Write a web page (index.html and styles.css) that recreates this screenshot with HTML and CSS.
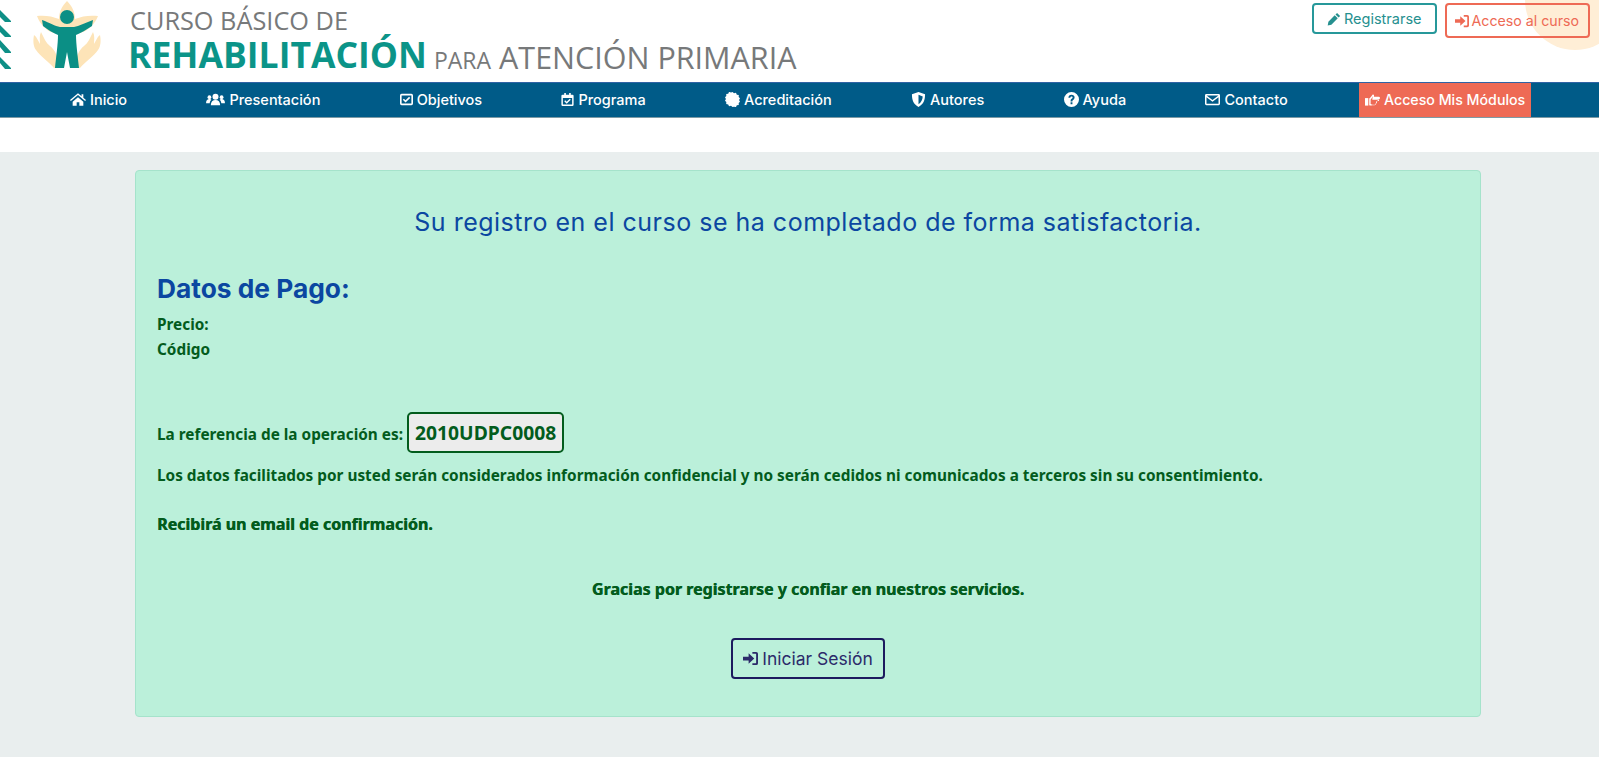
FILE: index.html
```html
<!DOCTYPE html>
<html lang="es">
<head>
<meta charset="utf-8">
<title>Curso Básico de Rehabilitación</title>
<link rel="stylesheet" href="styles.css">
</head>
<body>
<svg width="0" height="0" class="defs">
  <symbol id="i-login" viewBox="0 0 16 16"><path d="M0 6h6V2.500L12 8l-6 5.500V10H0z"/><path d="M10 1h4a2 2 0 0 1 2 2v10a2 2 0 0 1-2 2h-4v-2h3.500a.5.5 0 0 0 .5-.5v-9a.5.5 0 0 0-.5-.5H10z"/></symbol>
</svg>
<header class="top">
  <div class="blob"></div>
  <svg class="chevrons" viewBox="0 0 12 70" width="12" height="70"><path d="M0 10l11 11v1H5L0 17zM0 25l11 11v1H5L0 32zM0 40l11 12v1H5L0 47zM0 57l11 11v1H5L0 63z"/></svg>
  <svg class="logo-mark" viewBox="33 0 72 70" width="72" height="70">
    <path class="sand" d="M67 1C72 6 75 12 75 19 82 16 90 15 98 16 95 24 88 31 80 33H54C46 31 40 24 37 16 44 15 52 16 59 19 59 12 62 6 67 1z"/>
    <path class="sand" d="M34 35C37 37 38 41 40 44 40 40 39 36 41 32 44 38 46 43 50 46 55 50 58 56 59 68H54C49 62 40 56 36 50 33 46 33 40 34 35z"/>
    <path class="sand" transform="matrix(-1 0 0 1 134 0)" d="M34 35C37 37 38 41 40 44 40 40 39 36 41 32 44 38 46 43 50 46 55 50 58 56 59 68H54C49 62 40 56 36 50 33 46 33 40 34 35z"/>
    <circle class="teal" cx="67" cy="17" r="7"/>
    <path class="teal" d="M42 20C50 23 55 26 60 27H74C79 26 85 23 93 20L92 26C86 30 81 33 76 35 76 44 78 58 79 68H70L67 52 64 68H55C56 58 58 44 58 35 53 33 48 30 43 26z"/>
  </svg>
  <div class="brand">
    <div class="brand-top">CURSO BÁSICO DE</div>
    <div class="brand-main"><strong>REHABILITACIÓN</strong><small>PARA</small><span>ATENCIÓN PRIMARIA</span></div>
  </div>
  <div class="top-actions">
    <a class="pill pill-teal"><svg class="ic" viewBox="0 0 16 16"><path d="M11.500 1l3.500 3.500-1.800 1.800-3.500-3.500zM8.800 3.700l3.500 3.500-7.300 7.300-4.200.8.800-4.300z"/></svg>Registrarse</a>
    <a class="pill pill-coral"><svg class="ic"><use href="#i-login"/></svg>Acceso al curso</a>
  </div>
</header>
<nav class="nav">
  <a class="nav-item"><svg class="ic ic-home" viewBox="0 0 18 16"><path d="M9 1L0 8.500l1 1.200L9 3l8 6.700 1-1.200-3-2.500V2h-2v2.300zM3 10.500V15h4.500v-4h3v4H15v-4.500L9 5.500z"/></svg>Inicio</a>
  <a class="nav-item"><svg class="ic ic-w" viewBox="0 0 20 16"><circle cx="10" cy="5" r="3.200"/><circle cx="3.500" cy="5.500" r="2"/><circle cx="16.500" cy="5.500" r="2"/><path d="M5 14c0-3.500 2-5.500 5-5.500s5 2 5 5.500zM0 11c0-2 1.500-3.500 3.500-3.500 1 0 1.800.4 2 .8C4.500 9.300 4 10.500 3.800 12H0zM20 11c0-2-1.500-3.500-3.500-3.500-1 0-1.800.4-2 .8 1 1 1.500 2.200 1.700 3.700H20z"/></svg>Presentación</a>
  <a class="nav-item"><svg class="ic ic-s" viewBox="0 0 16 16"><path fill-rule="evenodd" d="M2 1h12a2 2 0 0 1 2 2v10a2 2 0 0 1-2 2H2a2 2 0 0 1-2-2V3a2 2 0 0 1 2-2zm0 2v10h12V3z"/><path d="M6.800 11.800L3.400 8.400l1.400-1.400 2 2 4.400-4.400 1.400 1.400z"/></svg>Objetivos</a>
  <a class="nav-item"><svg class="ic ic-s" viewBox="0 0 16 16"><path fill-rule="evenodd" d="M4 0h2v2h4V0h2v2h2a1.500 1.500 0 0 1 1.500 1.500v11A1.500 1.500 0 0 1 14 16H2a1.500 1.500 0 0 1-1.500-1.500v-11A1.500 1.500 0 0 1 2 2h2zM2.300 6v8.200h11.400V6z"/><path d="M7 13.200L4 10.200l1.200-1.200L7 10.800l3.800-3.800L12 8.200z"/></svg>Programa</a>
  <a class="nav-item"><svg class="ic" viewBox="0 0 16 16"><path d="M8 0l1.600 1.400L11.700.9l.9 1.900 2.100.4-.1 2.100L16 6.600 15 8.500l1 1.900-1.400 1.300.1 2.100-2.100.4-.9 1.900-2.100-.5L8 16l-1.600-1.400-2.100.5-.9-1.900-2.100-.4.1-2.100L0 9.400 1 7.500 0 5.600l1.400-1.300-.1-2.100 2.100-.4.9-1.900 2.100.5z"/></svg>Acreditación</a>
  <a class="nav-item"><svg class="ic" viewBox="0 0 16 16"><path fill-rule="evenodd" d="M8 0l7 2.500c0 6-1.500 10.500-7 13.500C2.500 13 1 8.500 1 2.500zm0 3v10c3-2 4.300-5 4.500-8.300z"/></svg>Autores</a>
  <a class="nav-item"><svg class="ic" viewBox="0 0 16 16"><path fill-rule="evenodd" d="M8 0a8 8 0 1 1 0 16A8 8 0 0 1 8 0zM7 11v2h2v-2zM8 3C6 3 4.800 4.200 4.700 6h2c.1-.7.500-1.100 1.300-1.100.7 0 1.200.4 1.200 1 0 1.300-2.200 1.300-2.200 3.600V10h2v-.3c0-1.400 2.300-1.600 2.300-3.900C11.300 4.100 9.900 3 8 3z"/></svg>Ayuda</a>
  <a class="nav-item"><svg class="ic" viewBox="0 0 16 16"><path fill-rule="evenodd" d="M1.500 2h13A1.500 1.500 0 0 1 16 3.500v9a1.500 1.500 0 0 1-1.500 1.500h-13A1.500 1.500 0 0 1 0 12.500v-9A1.500 1.500 0 0 1 1.500 2zm.2 1.600L8 8.500l6.300-4.900zm-.1 1.900v6.900h12.800V5.500L8 10.500z"/></svg>Contacto</a>
  <a class="nav-item nav-cta"><svg class="ic" viewBox="0 0 16 16"><path d="M0 6.500h3.500v8H0z"/><path fill-rule="evenodd" d="M4.500 7C6 6.500 7 4 8 3c1-1 2 0 1.500 2h5a1.500 1.500 0 0 1 0 3H13a1.300 1.300 0 0 1-.5 2.300 1.300 1.300 0 0 1-.7 2c0 1-.7 1.700-1.700 1.700H7.500C6 15 5.500 14.300 4.500 14zM6 8v4.800c1 .5 1.500.7 2 .7h2.500c.5 0 .7-.5.500-1 .7-.1 1-.8.6-1.300.7-.3.9-1 .3-1.500h2.400a.75.75 0 0 0 0-1.500H7.800C8 5.800 8.300 5 8.300 4.500 7.700 5.500 7 7 6 8z"/></svg>Acceso Mis Módulos</a>
</nav>
<div class="spacer"></div>
<main class="page">
  <section class="alert">
    <h2 class="lead">Su registro en el curso se ha completado de forma satisfactoria.</h2>
    <h3 class="pay">Datos de Pago:</h3>
    <p class="row">Precio:</p>
    <p class="row">Código</p>
    <p class="ref">La referencia de la operación es: <span class="ref-code">2010UDPC0008</span></p>
    <p class="row legal">Los datos facilitados por usted serán considerados información confidencial y no serán cedidos ni comunicados a terceros sin su consentimiento.</p>
    <p class="row heavy mail">Recibirá un email de confirmación.</p>
    <p class="row heavy thanks">Gracias por registrarse y confiar en nuestros servicios.</p>
    <div class="cta-wrap"><a class="login"><svg class="ic"><use href="#i-login"/></svg>Iniciar Sesión</a></div>
  </section>
</main>
</body>
</html>
```
FILE: styles.css
```css
* { box-sizing: border-box; }
html, body { margin: 0; height: 100%; }
body { background: #e9eeee; font-family: "Inter", "Open Sans", sans-serif; overflow: hidden; }
.defs { position: absolute; }
.ic { width: 15px; height: 15px; fill: currentColor; flex: none; }
.ic-w { width: 19px; }
.ic-home { width: 16px; }
.ic-s { width: 13px; height: 13px; }

.top { position: relative; height: 82px; background: #fff; display: flex; align-items: flex-start; overflow: hidden; }
.blob { position: absolute; right: -26px; top: -50px; width: 100px; height: 100px; border-radius: 50%; background: #ffeed6; }
.chevrons { fill: #0e8f86; margin-right: 21px; flex: none; }
.logo-mark { flex: none; margin-right: 25px; }
.sand { fill: #fde4b8; }
.teal { fill: #0b8f85; }
.brand { padding-top: 6px; }
.brand-top { font: 400 25.300px/28px "Open Sans", sans-serif; color: #77797a; }
.brand-main { display: flex; align-items: baseline; color: #77797a; margin: 1px 0 0 -2px; line-height: 38px; white-space: nowrap; }
.brand-main strong { font: 700 35.500px/38px "Open Sans", sans-serif; color: #0b9488; }
.brand-main small { font: 400 23px/38px "Open Sans", sans-serif; margin: 0 8px 0 7px; position: relative; top: 1px; }
.brand-main span { font: 400 30.500px/38px "Open Sans", sans-serif; position: relative; top: 1px; }
.top-actions { position: absolute; right: 9px; top: 3px; display: flex; gap: 8px; align-items: flex-start; }
.pill { display: flex; align-items: center; gap: 3px; height: 31px; border: 2px solid; border-radius: 4px; background: #fff; }
.pill .ic { width: 14px; height: 14px; }
.pill-teal { padding: 0 13px; font-size: 14.500px; color: #26908f; border-color: #26989a; }
.pill-coral { padding: 0 9px 0 8px; font-size: 14.200px; color: #ee6a55; border-color: #ee6a55; height: 35px; background: transparent; }

.nav { height: 36px; background: #005b88; border-top: 1px solid #2f63a5; border-bottom: 1px solid #7d9aa5; display: flex; align-items: stretch; gap: 67.300px; padding-left: 64px; }
.nav-item { display: flex; align-items: center; gap: 4px; padding: 0 6px 2px; color: #fff; font-size: 14.500px; font-weight: 500; white-space: nowrap; }
.nav-cta { background: #ee6a55; font-size: 14.200px; margin-left: -2px; }
.spacer { height: 34px; background: #fff; }

.page { padding: 18px 120px 0 135px; }
.alert { width: 1346px; height: 547px; padding: 0 21px; background: #bbf0da; border: 1px solid #a5e3cb; border-radius: 4px; color: #035c1d; }
.lead { margin: 36px 0 0; text-align: center; font-size: 25px; letter-spacing: .5px; line-height: 30px; font-weight: 400; color: #0b47a1; }
.pay { margin: 37px 0 0; font-size: 26.300px; line-height: 30px; font-weight: 700; color: #0b47a1; }
.row { margin: 0; font: 700 15.350px/24.500px "Noto Sans", "DejaVu Sans", sans-serif; }
.pay + .row { margin-top: 8px; }
.ref { margin: 51px 0 0; font: 700 15.350px/24px "Noto Sans", sans-serif; display: flex; align-items: baseline; gap: 4px; height: 41px; }
.ref-code { display: flex; align-items: center; height: 41px; padding: 0 6px; border: 2px solid #035c1d; border-radius: 5px; background: #ececec; font-size: 19.300px; }
.legal { margin-top: 10px; }
.heavy { font-size: 16px; text-shadow: .4px 0 0 #035c1d; }
.mail { margin-top: 24px; }
.thanks { margin-top: 41px; text-align: center; }
.cta-wrap { display: flex; justify-content: center; margin-top: 36px; }
.login { display: flex; align-items: center; gap: 4px; height: 41px; padding: 0 10px; border: 2px solid #1c1a5e; border-radius: 4px; font-size: 17.500px; color: #2c2a6a; }
```
